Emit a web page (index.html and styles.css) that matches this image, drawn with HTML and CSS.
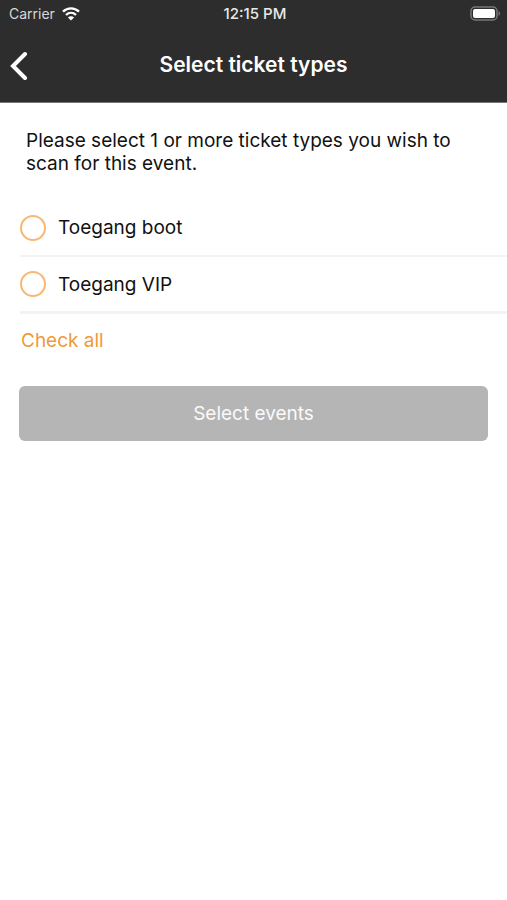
FILE: index.html
```html
<!DOCTYPE html>
<html lang="en">
<head>
<meta charset="utf-8">
<meta name="viewport" content="width=device-width, initial-scale=1">
<title>Select ticket types</title>
<link rel="stylesheet" href="styles.css">
</head>
<body>
<header class="header">
  <div class="status">
    <div class="carrier">
      <span>Carrier</span>
      <svg class="wifi" viewBox="0 0 18 14" width="18" height="14" aria-hidden="true">
        <path d="M1 4.700C5.600.2 12.400.2 17 4.700M4 8c2.900-2.800 7.100-2.800 10 0"/>
        <path class="solid" d="M9 13.600 5.900 10.500c1.800-1.600 4.400-1.600 6.200 0z"/>
      </svg>
    </div>
    <time class="clock">12:15 PM</time>
    <svg class="battery" viewBox="0 0 31 16" width="31" height="16" aria-hidden="true">
      <rect class="shell" x="1" y="1" width="26" height="13" rx="4"/>
      <rect class="charge" x="3" y="3" width="22" height="9" rx="2"/>
      <path class="tip" d="M28.500 5.200c2 .7 2 3.900 0 4.600z"/>
    </svg>
  </div>
  <nav class="nav">
    <button class="back" type="button" aria-label="Back">
      <svg viewBox="0 0 18 30" width="18" height="30" aria-hidden="true"><path d="M15 4 3 16l12 12"/></svg>
    </button>
    <h1 class="title">Select ticket types</h1>
  </nav>
</header>
<main class="content">
  <p class="intro">Please select 1 or more ticket types you wish to scan for this event.</p>
  <form>
    <div class="tickets">
      <label class="ticket"><input type="checkbox" name="ticket" value="boot"><span>Toegang boot</span></label>
      <label class="ticket"><input type="checkbox" name="ticket" value="vip"><span>Toegang VIP</span></label>
    </div>
    <button class="check-all" type="button">Check all</button>
    <button class="submit" type="submit" disabled>Select events</button>
  </form>
</main>
</body>
</html>
```

FILE: styles.css
```css
* {
  box-sizing: border-box;
}

body {
  margin: 0;
  background: #fff;
  color: #111;
  font: 19px/23px Inter, "Liberation Sans", sans-serif;
}

button {
  padding: 0;
  border: 0;
  background: none;
  font: inherit;
  cursor: pointer;
}

svg {
  display: block;
}

.header {
  background: #2d2d2d;
  border-bottom: 1px solid #777;
  color: #fff;
}

.status {
  display: grid;
  grid-template-columns: 1fr auto 1fr;
  align-items: center;
  height: 28px;
  padding: 0 6px 0 9px;
  font-size: 14px;
  line-height: 18px;
}

.carrier {
  display: flex;
  align-items: center;
  gap: 7px;
  color: #d8d8d8;
}

.wifi {
  fill: none;
  stroke: #fff;
  stroke-width: 2.4;
}

.wifi .solid {
  fill: #fff;
  stroke: none;
}

.clock {
  color: #e8e8e8;
  font-size: 15px;
  font-weight: 500;
}

.battery {
  justify-self: end;
}

.shell {
  fill: none;
  stroke: #777;
  stroke-width: 1.5;
}

.charge {
  fill: #fff;
}

.tip {
  fill: #777;
}

.nav {
  display: grid;
  grid-template-columns: 40px 1fr 40px;
  align-items: center;
  height: 74px;
}

.back {
  padding-left: 10px;
}

.back path {
  fill: none;
  stroke: #fff;
  stroke-width: 4;
  stroke-linecap: round;
}

.title {
  margin: 0;
  font-size: 21px;
  font-weight: 600;
  line-height: 26px;
  text-align: center;
}

.content {
  padding-top: 26px;
}

.intro {
  margin: 0 26px 25px;
}

.tickets {
  margin-left: 20px;
}

.ticket {
  display: flex;
  align-items: center;
  gap: 12px;
  height: 57px;
  border-bottom: 2px solid #f3f3f3;
}

.ticket:last-child {
  border-bottom-width: 3px;
}

.ticket input {
  appearance: none;
  flex: none;
  width: 26px;
  height: 26px;
  margin: 0;
  border: 2px solid #f7b874;
  border-radius: 50%;
}

.ticket input:checked {
  background: #f09a37;
}

.check-all {
  display: block;
  margin: 15px 21px 34px;
  color: #f09a37;
}

.submit {
  display: block;
  width: calc(100% - 38px);
  height: 55px;
  margin: 0 19px;
  border-radius: 6px;
  background: #b5b5b5;
  color: #fafafa;
}
```
